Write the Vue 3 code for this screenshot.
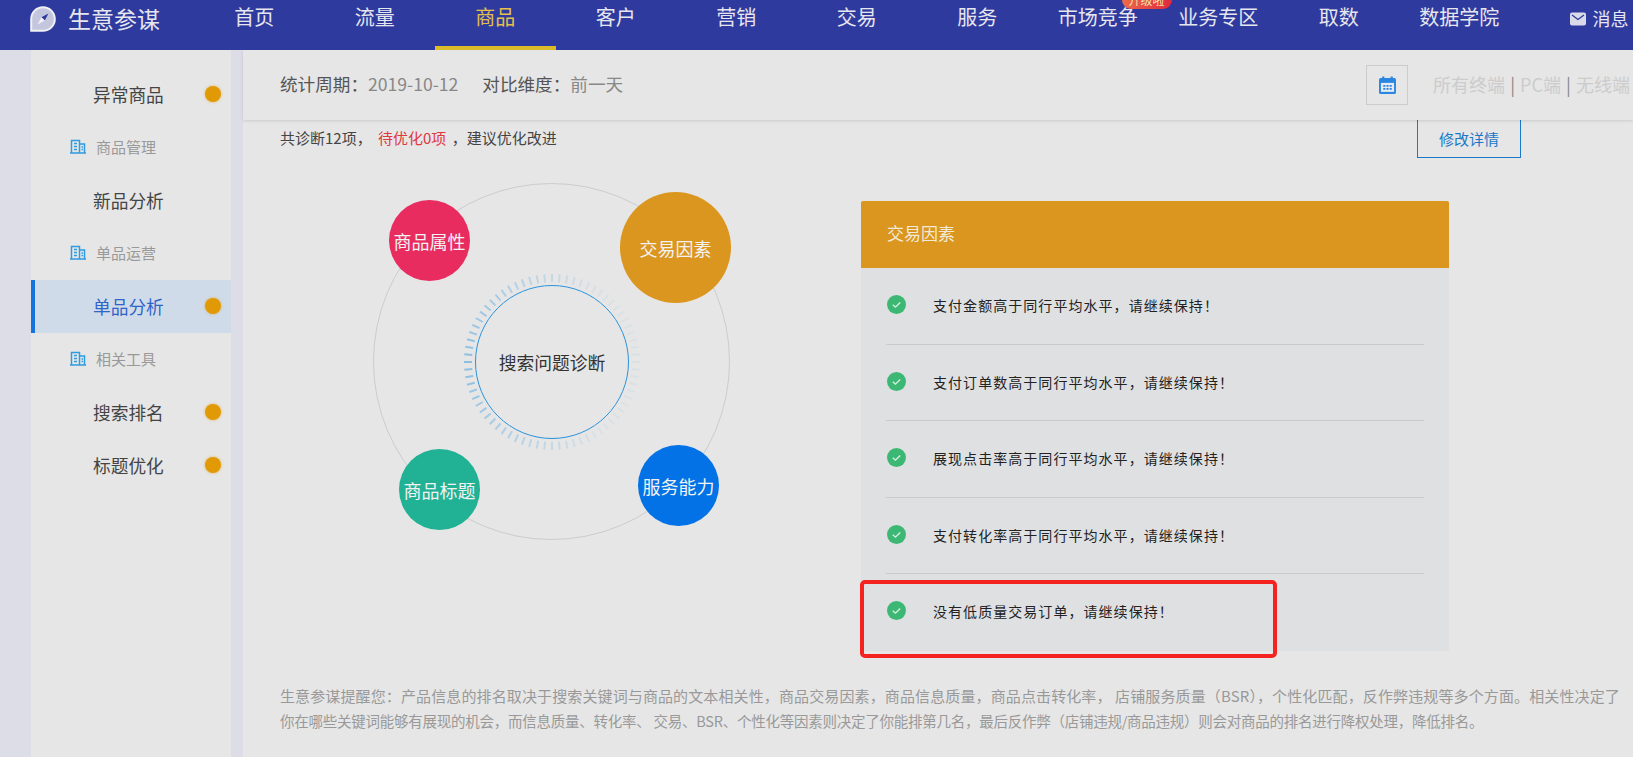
<template>
  <div class="page">
    <!-- 顶部导航 -->
    <header class="topbar">
      <div class="brand">
        <svg class="brand-logo" viewBox="0 0 26 26">
          <path d="M13 1.2a11.8 11.8 0 0 1 0 23.6H1.2V13A11.8 11.8 0 0 1 13 1.2z" fill="#c4c6de" stroke="#f0f0f5" stroke-width="2" />
          <path d="M18.4 7.6l-3.6 7-3.4-3.4z" fill="#2f3a9e" />
          <path d="M7.6 18.4l3.8-7.2 3.4 3.4z" fill="#f0f0f5" />
        </svg>
        <span class="brand-name">生意参谋</span>
      </div>
      <nav class="nav">
        <a
          v-for="item in navItems"
          :key="item"
          class="nav-item"
          :class="{ active: item === '商品' }"
        >
          {{ item }}
          <span v-if="item === '市场竞争'" class="nav-badge">升级啦</span>
        </a>
      </nav>
      <div class="message">
        <svg class="mail" viewBox="0 0 16 14">
          <rect x="0" y="0.5" width="16" height="13" rx="2" fill="#d9dbe9" />
          <path d="M2 3l6 4.5L14 3" fill="none" stroke="#2f3a9e" stroke-width="1.3" />
        </svg>
        <span>消息</span>
      </div>
    </header>

    <div class="body">
      <div class="strip"></div>

      <!-- 左侧菜单 -->
      <aside class="sidebar">
        <template v-for="row in menu" :key="row.label">
          <div v-if="row.group" class="menu-group">
            <svg class="group-icon" viewBox="0 0 16 15">
              <path d="M1.5 13.5V1.5h8v12M9.5 5h5v8.5M0 14h16M4 4.5h3M4 7.5h3M4 10.5h3M11.5 8h1.5M11.5 10.5h1.5" fill="none" stroke="#2f9be0" stroke-width="1.5" />
            </svg>
            <span>{{ row.label }}</span>
          </div>
          <div v-else class="menu-item" :class="{ active: row.active }">
            <span>{{ row.label }}</span>
            <i v-if="row.dot" class="dot"></i>
          </div>
        </template>
      </aside>

      <main class="main">
        <!-- 统计周期 -->
        <div class="filter-bar">
          <div class="period">统计周期：<em>2019-10-12</em></div>
          <div class="period compare">对比维度：<em>前一天</em></div>
          <button class="calendar">
            <svg viewBox="0 0 16 17" width="17" height="18">
              <path d="M0 3.5a1.5 1.5 0 0 1 1.5-1.5H3V.5h2V2h6V.5h2V2h1.5A1.5 1.5 0 0 1 16 3.5v12a1.5 1.5 0 0 1-1.5 1.5h-13A1.5 1.5 0 0 1 0 15.5z" fill="#2a86e0" />
              <rect x="1.8" y="6.5" width="12.4" height="8.5" fill="#e6eaf0" />
              <path d="M4 8.5h2v1.6H4zM7 8.5h2v1.6H7zM10 8.5h2v1.6h-2zM4 11.4h2V13H4zM7 11.4h2V13H7zM10 11.4h2V13h-2z" fill="#2a86e0" />
            </svg>
          </button>
          <div class="terminals">所有终端 <b>|</b> PC端 <b>|</b> 无线端</div>
        </div>

        <div class="summary">
          <p class="summary-text">共诊断12项， <span class="warn">待优化0项</span> ，建议优化改进</p>
          <button class="detail-btn">修改详情</button>
        </div>

        <div class="content">
          <!-- 诊断环形图 -->
          <div class="diagram">
            <div class="orbit"></div>
            <svg class="ticks" viewBox="-92 -92 184 184">
              <line
                v-for="t in ticks"
                :key="t.angle"
                x1="-88"
                y1="0"
                x2="-80"
                y2="0"
                stroke="#7db8e2"
                stroke-width="2"
                :opacity="t.opacity"
                :transform="`rotate(${t.angle})`"
              />
            </svg>
            <div class="core">搜索问题诊断</div>
            <div
              v-for="b in bubbles"
              :key="b.label"
              class="bubble"
              :class="b.cls"
            >
              {{ b.label }}
            </div>
          </div>

          <!-- 交易因素 -->
          <section class="panel">
            <div class="panel-head">交易因素</div>
            <ul class="panel-list">
              <li v-for="text in results" :key="text" class="panel-row">
                <svg class="check" viewBox="0 0 18 18">
                  <circle cx="9" cy="9" r="9" fill="#3db874" />
                  <path d="M5.5 9.2l2.5 2.3 4.5-4.4" fill="none" stroke="#d6efdf" stroke-width="1.3" />
                </svg>
                <span>{{ text }}</span>
              </li>
            </ul>
            <div class="highlight"></div>
          </section>
        </div>

        <p class="tips">
          <span class="tip-first">生意参谋提醒您：产品信息的排名取决于搜索关键词与商品的文本相关性，商品交易因素，商品信息质量，商品点击转化率， 店铺服务质量（BSR），个性化匹配，反作弊违规等多个方面。相关性决定了</span>
          <span class="tip-second">你在哪些关键词能够有展现的机会，而信息质量、转化率、 交易、BSR、个性化等因素则决定了你能排第几名，最后反作弊（店铺违规/商品违规）则会对商品的排名进行降权处理，降低排名。</span>
        </p>
      </main>
    </div>
  </div>
</template>

<script setup>
const navItems = ['首页', '流量', '商品', '客户', '营销', '交易', '服务', '市场竞争', '业务专区', '取数', '数据学院']

const menu = [
  { label: '异常商品', dot: true },
  { label: '商品管理', group: true },
  { label: '新品分析' },
  { label: '单品运营', group: true },
  { label: '单品分析', dot: true, active: true },
  { label: '相关工具', group: true },
  { label: '搜索排名', dot: true },
  { label: '标题优化', dot: true }
]

const bubbles = [
  { label: '商品属性', cls: 'pink' },
  { label: '交易因素', cls: 'orange' },
  { label: '商品标题', cls: 'green' },
  { label: '服务能力', cls: 'blue' }
]

const results = [
  '支付金额高于同行平均水平，请继续保持！',
  '支付订单数高于同行平均水平，请继续保持！',
  '展现点击率高于同行平均水平，请继续保持！',
  '支付转化率高于同行平均水平，请继续保持！',
  '没有低质量交易订单，请继续保持！'
]

// 刻度环：左侧最深，向右逐渐变淡
const ticks = Array.from({ length: 72 }, (_, i) => {
  const angle = i * 5
  const dist = Math.min(angle, 360 - angle) / 180
  return { angle, opacity: Math.max(0.1, 0.85 - dist * 1.1).toFixed(2) }
})
</script>

<style>
html,
body {
  margin: 0;
  background: #e6e6e6;
}
</style>

<style scoped>
.page {
  width: 1633px;
  height: 757px;
  overflow: hidden;
  display: flex;
  flex-direction: column;
  background: #e6e6e6;
  font-family: "Noto Sans CJK SC", "Liberation Sans", sans-serif;
  color: #333;
}

.topbar {
  flex: none;
  position: relative;
  z-index: 3;
  height: 50px;
  display: flex;
  background: #2f3a9e;
  color: #e6e6ee;
}

.brand {
  width: 194px;
  flex: none;
  display: flex;
  align-items: flex-start;
  padding: 6px 0 0 30px;
  box-sizing: border-box;
}

.brand-logo {
  width: 26px;
  height: 26px;
}

.brand-name {
  margin-left: 12px;
  font-size: 23px;
  line-height: 25px;
  white-space: nowrap;
}

.nav {
  display: flex;
}

.nav-item {
  position: relative;
  width: 120.5px;
  height: 50px;
  box-sizing: border-box;
  padding-top: 2px;
  text-align: center;
  font-size: 20px;
  line-height: 30px;
  white-space: nowrap;
}

.nav-item.active {
  color: #e3c04c;
  border-bottom: 4px solid #dcbb2a;
}

.nav-badge {
  position: absolute;
  top: -9px;
  left: 84px;
  width: 50px;
  height: 18px;
  border-radius: 9px;
  background: linear-gradient(90deg, #ec6a4a, #e0283f);
  color: #f5e3a8;
  font-size: 12px;
  line-height: 18px;
}

.message {
  display: flex;
  align-items: flex-start;
  padding: 10px 0 0 50px;
  font-size: 18px;
  line-height: 16px;
  white-space: nowrap;
}

.mail {
  width: 16px;
  height: 14px;
  margin: 2px 7px 0 0;
}

.body {
  flex: 1;
  display: flex;
  min-height: 0;
  background: #dcdde6;
}

.strip {
  width: 31px;
  flex: none;
}

.sidebar {
  width: 200px;
  flex: none;
  box-sizing: border-box;
  padding-top: 17.5px;
  background: #e6e6e6;
}

.menu-item,
.menu-group {
  height: 53px;
  display: flex;
  align-items: center;
  box-sizing: border-box;
}

.menu-item {
  position: relative;
  padding: 0 0 1px 62px;
  font-size: 17.7px;
  color: #444;
}

.menu-item.active {
  background: #d0dbe9;
  color: #2f64c8;
  border-left: 4px solid #1672dc;
  padding-left: 58px;
}

.menu-group {
  padding: 0 0 2px 39px;
  font-size: 15px;
  color: #999;
}

.group-icon {
  width: 16px;
  height: 15px;
  margin-right: 10px;
}

.dot {
  position: absolute;
  left: 174px;
  top: 18px;
  width: 16px;
  height: 16px;
  border-radius: 50%;
  background: #e19a05;
  box-shadow: 0 0 3px rgba(225, 154, 5, 0.6);
}

.menu-item.active .dot {
  left: 170px;
}

.main {
  flex: 1;
  min-width: 0;
  margin-left: 12px;
  background: #e6e6e6;
}

.filter-bar {
  position: relative;
  z-index: 2;
  height: 70px;
  display: flex;
  align-items: center;
  box-sizing: border-box;
  padding: 0 0 3px 37px;
  background: #e6e6e6;
  box-shadow: 0 1px 3px rgba(0, 0, 0, 0.12);
  white-space: nowrap;
}

.period {
  font-size: 17.6px;
  color: #555;
}

.period em {
  font-style: normal;
  color: #888;
}

.compare {
  margin-left: 24px;
}

.calendar {
  width: 42px;
  height: 40px;
  margin: 3px 0 0 743px;
  padding: 0;
  display: flex;
  align-items: center;
  justify-content: center;
  background: transparent;
  border: 1px solid #ccc;
}

.terminals {
  margin-left: 25px;
  font-size: 18px;
  color: #ccc;
}

.terminals b {
  font-weight: 400;
  color: #888;
  margin: 0 1px;
}

.summary {
  display: flex;
  align-items: flex-start;
  justify-content: space-between;
  height: 63px;
  padding: 0 112px 0 37px;
}

.summary-text {
  margin: 8px 0 0;
  font-size: 15px;
  line-height: 20px;
  color: #444;
}

.warn {
  margin: 0 2px 0 3px;
  color: #e0383e;
}

.detail-btn {
  width: 104px;
  height: 39px;
  margin-top: -1px;
  padding: 0;
  background: transparent;
  border: 1px solid #1a78c8;
  color: #1a78c8;
  font: inherit;
  font-size: 15px;
}

.content {
  display: flex;
  align-items: flex-start;
  padding-left: 130px;
}

.diagram {
  position: relative;
  width: 488px;
  height: 400px;
  flex: none;
}

.orbit {
  position: absolute;
  left: 0;
  top: 0;
  width: 357px;
  height: 357px;
  box-sizing: border-box;
  border: 1px solid #ccc;
  border-radius: 50%;
}

.ticks {
  position: absolute;
  left: 87px;
  top: 87px;
  width: 184px;
  height: 184px;
}

.core {
  position: absolute;
  left: 102px;
  top: 102px;
  width: 154px;
  height: 154px;
  box-sizing: border-box;
  border: 1px solid #2a93dc;
  border-radius: 50%;
  display: flex;
  align-items: center;
  justify-content: center;
  font-size: 17.8px;
  color: #333;
}

.bubble {
  position: absolute;
  width: 81px;
  height: 81px;
  border-radius: 50%;
  display: flex;
  align-items: center;
  justify-content: center;
  font-size: 18px;
  color: #f2f2f2;
  white-space: nowrap;
}

.pink {
  left: 16px;
  top: 17px;
  background: #e82c60;
}

.orange {
  left: 247px;
  top: 9px;
  width: 111px;
  height: 111px;
  background: #db961f;
}

.green {
  left: 26px;
  top: 266px;
  background: #21b295;
}

.blue {
  left: 265px;
  top: 262px;
  background: #0272e6;
}

.panel {
  position: relative;
  width: 588px;
  margin-top: 18px;
  background: #dfe0e2;
}

.panel-head {
  height: 67px;
  padding-left: 26px;
  line-height: 64px;
  background: #db961f;
  color: #f1ead8;
  font-size: 17px;
  border-radius: 2px 2px 0 0;
}

.panel-list {
  margin: 0;
  padding: 0 25px;
  list-style: none;
}

.panel-row {
  height: 76.5px;
  display: flex;
  align-items: flex-start;
  box-sizing: border-box;
  padding-top: 25px;
  font-size: 14px;
  line-height: 24px;
  letter-spacing: 1.05px;
  color: #222;
  border-bottom: 1px solid #c9cacc;
  white-space: nowrap;
}

.panel-row:last-child {
  border-bottom: 0;
}

.check {
  width: 19px;
  height: 19px;
  flex: none;
  margin: 2px 27px 0 1px;
}

.highlight {
  position: absolute;
  left: -1px;
  top: 379px;
  width: 417px;
  height: 78px;
  box-sizing: border-box;
  border: 4px solid #f5231f;
  border-radius: 5px;
}

.tips {
  margin: 32px 0 0;
  padding-left: 37px;
  line-height: 25px;
  color: #999;
  white-space: nowrap;
}

.tip-first {
  display: block;
  font-size: 15px;
  letter-spacing: 0.12px;
}

.tip-second {
  display: block;
  font-size: 14.5px;
  letter-spacing: -0.25px;
}
</style>
